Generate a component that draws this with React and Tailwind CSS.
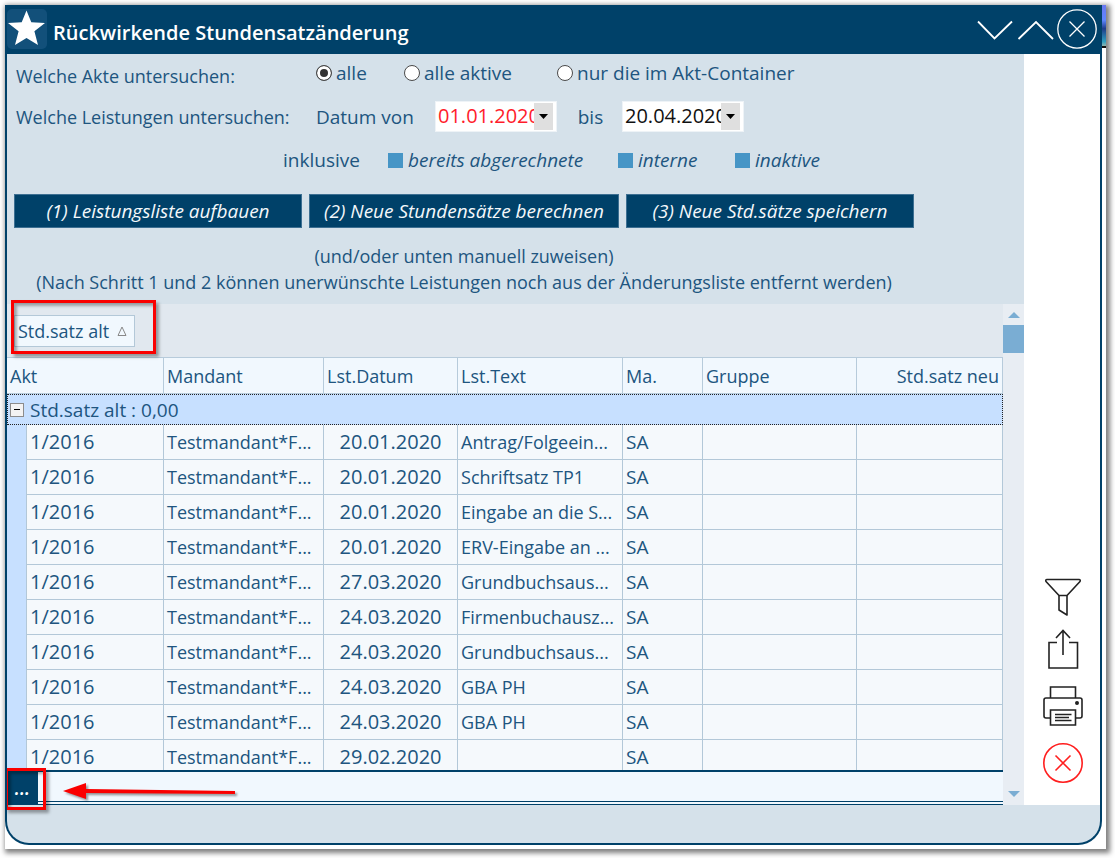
import React from "react";

const rows = [
  ["1/2016", "Testmandant*F...", "20.01.2020", "Antrag/Folgeein...", "SA"],
  ["1/2016", "Testmandant*F...", "20.01.2020", "Schriftsatz TP1", "SA"],
  ["1/2016", "Testmandant*F...", "20.01.2020", "Eingabe an die S...", "SA"],
  ["1/2016", "Testmandant*F...", "20.01.2020", "ERV-Eingabe an ...", "SA"],
  ["1/2016", "Testmandant*F...", "27.03.2020", "Grundbuchsaus...", "SA"],
  ["1/2016", "Testmandant*F...", "24.03.2020", "Firmenbuchausz...", "SA"],
  ["1/2016", "Testmandant*F...", "24.03.2020", "Grundbuchsaus...", "SA"],
  ["1/2016", "Testmandant*F...", "24.03.2020", "GBA PH", "SA"],
  ["1/2016", "Testmandant*F...", "24.03.2020", "GBA PH", "SA"],
  ["1/2016", "Testmandant*F...", "29.02.2020", "", "SA"],
];

function TitleBar() {
  return (
    <header className="flex h-[49px] shrink-0 items-center bg-[#004169] pr-[3px] pb-px text-white">
      <svg className="h-10 w-10 shrink-0" viewBox="0 0 40 40" aria-hidden="true">
        <rect width="40" height="40" rx="5" fill="#12507a" />
        <path
          d="M19.5 1.500 L24.3 13.3 L38 14.1 L27.4 22.3 L31 36 L19.5 29 L8 36 L11.6 22.3 L1 14.1 L14.7 13.3 Z"
          fill="#fff"
        />
      </svg>
      <h1 className="ml-[6px] mt-2 flex-1 truncate text-[20px] leading-7 font-semibold">
        Rückwirkende Stundensatzänderung
      </h1>
      <button type="button" aria-label="Nach unten" className="h-10 w-10">
        <svg viewBox="0 0 40 40" className="h-10 w-10" fill="none" stroke="#fff" strokeWidth="1.8">
          <path d="M1 12.500 L17.500 29.500 L35 12.500" />
        </svg>
      </button>
      <button type="button" aria-label="Nach oben" className="h-10 w-10">
        <svg viewBox="0 0 40 40" className="h-10 w-10" fill="none" stroke="#fff" strokeWidth="1.8">
          <path d="M1.500 30 L19 13 L36 30" />
        </svg>
      </button>
      <button type="button" aria-label="Schließen" className="h-10 w-10">
        <svg viewBox="0 0 40 40" className="h-10 w-10" fill="none" stroke="#fff" strokeWidth="1.300">
          <circle cx="20" cy="20" r="19.200" />
          <path d="M12.500 12.500 L27.500 27.500 M27.500 12.500 L12.500 27.500" />
        </svg>
      </button>
    </header>
  );
}

function Radio({ label, checked }) {
  return (
    <label className="flex items-center gap-1 whitespace-nowrap">
      <input
        type="radio"
        name="akte"
        defaultChecked={checked}
        className="h-4 w-4 shrink-0 appearance-none rounded-full border border-[#4a4a4a] bg-white checked:bg-[#333] checked:shadow-[inset_0_0_0_3px_#fff]"
      />
      {label}
    </label>
  );
}

function Check({ label }) {
  return (
    <label className="flex items-center gap-[5px] whitespace-nowrap italic">
      <input type="checkbox" className="h-[15px] w-[15px] shrink-0 appearance-none bg-[#4695c6]" />
      {label}
    </label>
  );
}

function DateField({ label, value, red }) {
  return (
    <div className="flex h-[31px] w-[122px] shrink-0 border border-[#eef3f7] bg-white p-px pr-[3px]">
      <input
        type="text"
        aria-label={label}
        defaultValue={value}
        className={
          "h-[26px] w-0 flex-1 bg-white pl-px text-[20px] outline-none " + (red ? "text-[#ff1c2b]" : "text-[#111]")
        }
      />
      <button
        type="button"
        aria-label={label + " wählen"}
        className="flex h-[27px] w-[19px] items-center justify-center bg-[#dfdfdf]"
      >
        <svg viewBox="0 0 9 5" className="h-[5px] w-[9px]" aria-hidden="true">
          <path d="M0 0 H9 L4.500 5 Z" fill="#000" />
        </svg>
      </button>
    </div>
  );
}

const action =
  "h-[34px] border border-[#3d6f92] bg-[#004169] text-center italic whitespace-nowrap text-[#f4f8fb]";

function Filters() {
  return (
    <form className="flex h-[250px] shrink-0 flex-col">
      <div className="mt-[3px] grid h-8 grid-cols-[300px_88px_153px_auto] items-center pl-[9px]">
        <span className="pt-[6px] text-[18px]">Welche Akte untersuchen:</span>
        <Radio label="alle" checked />
        <Radio label="alle aktive" />
        <Radio label="nur die im Akt-Container" />
      </div>
      <div className="mt-3 flex h-[31px] items-center pl-[9px]">
        <span className="w-[300px] shrink-0 text-[18px]">Welche Leistungen untersuchen:</span>
        <span className="w-[119px] shrink-0">Datum von</span>
        <DateField label="Datum von" value="01.01.2020" red />
        <span className="w-[65px] pl-[2px] text-center">bis</span>
        <DateField label="Datum bis" value="20.04.2020" />
      </div>
      <div className="mt-3 grid h-8 grid-cols-[105px_230px_117px_auto] items-center pl-[276px]">
        <span>inklusive</span>
        <Check label="bereits abgerechnete" />
        <Check label="interne" />
        <Check label="inaktive" />
      </div>
      <div className="mt-[18px] flex gap-[7px] pl-[7px]">
        <button type="button" className={action + " w-[288px]"}>(1) Leistungsliste aufbauen</button>
        <button type="button" className={action + " w-[310px]"}>(2) Neue Stundensätze berechnen</button>
        <button type="button" className={action + " w-[288px]"}>(3) Neue Std.sätze speichern</button>
      </div>
      <div className="mt-[15px] w-[914px] text-center text-[18px] leading-[26px]">
        <p>(und/oder unten manuell zuweisen)</p>
        <p>(Nach Schritt 1 und 2 können unerwünschte Leistungen noch aus der Änderungsliste entfernt werden)</p>
      </div>
    </form>
  );
}

const th =
  "h-[37px] whitespace-nowrap border-r border-b border-t border-[#b7cbdb] bg-[#f1f8fe] px-[3px] text-[18px] font-normal";
const td = "h-[35px] whitespace-nowrap border-r border-b border-[#b3c8d8] bg-[#f5f9fc] px-[3px]";

function Grid() {
  return (
    <table className="w-full table-fixed border-separate border-spacing-0 text-left">
      <colgroup>
        <col className="w-[20px]" />
        <col className="w-[137px]" />
        <col className="w-[160px]" />
        <col className="w-[134px]" />
        <col className="w-[165px]" />
        <col className="w-[80px]" />
        <col className="w-[154px]" />
        <col />
      </colgroup>
      <thead>
        <tr>
          <th colSpan={2} className={th}>Akt</th>
          <th className={th}>Mandant</th>
          <th className={th}>Lst.Datum</th>
          <th className={th}>Lst.Text</th>
          <th className={th}>Ma.</th>
          <th className={th}>Gruppe</th>
          <th className={th + " text-right"}>Std.satz neu</th>
        </tr>
      </thead>
      <tbody>
        <tr>
          <td colSpan={8} className="h-[31px] border border-dotted border-[#222] bg-[#c7e0ff] p-0">
            <div className="flex items-center gap-[6px] pl-[2px]">
              <button
                type="button"
                aria-label="Gruppe einklappen"
                className="flex h-[14px] w-[14px] items-center justify-center border border-[#8c8c8c] bg-[#f3f3f3]"
              >
                <span className="h-px w-[6px] bg-black" />
              </button>
              <span>Std.satz alt : 0,00</span>
            </div>
          </td>
        </tr>
        {rows.map((r, i) => (
          <tr key={i}>
            <td className="border-r border-[#b3c8d8] bg-[#c7e0ff] p-0" />
            <td className={td + " text-[20px]"}>{r[0]}</td>
            <td className={td + " text-[18px]"}>{r[1]}</td>
            <td className={td + " text-center text-[20px]"}>{r[2]}</td>
            <td className={td + " text-[18px]"}>{r[3]}</td>
            <td className={td}>{r[4]}</td>
            <td className={td} />
            <td className={td} />
          </tr>
        ))}
      </tbody>
    </table>
  );
}

function ScrollBar() {
  return (
    <div className="flex w-[21px] shrink-0 flex-col items-center bg-[#e8edf3]">
      <svg viewBox="0 0 12 6" className="mt-2 h-[6px] w-3" aria-hidden="true">
        <path d="M0 6 L6 0 L12 6 Z" fill="#7aadd3" />
      </svg>
      <div className="mt-[7px] h-[28px] w-full bg-[#7aadd3]" />
      <svg viewBox="0 0 12 6" className="mt-auto mb-2 h-[6px] w-3" aria-hidden="true">
        <path d="M0 0 L6 6 L12 0 Z" fill="#7aadd3" />
      </svg>
    </div>
  );
}

function SideBar() {
  return (
    <aside className="flex w-[76px] shrink-0 flex-col items-center justify-end gap-[17px] bg-white pb-[22px] pl-[2px]">
      <button type="button" aria-label="Filter">
        <svg viewBox="0 0 40 38" className="h-[38px] w-10" fill="none" stroke="#222" strokeWidth="1.600" strokeLinejoin="round">
          <path d="M4 1.500 H36 Q37.800 1.500 37 3.500 L24 17.500 H16 L3 3.500 Q2.200 1.500 4 1.500 Z" />
          <path d="M16 17.500 V32 L24 37 V17.500" />
        </svg>
      </button>
      <button type="button" aria-label="Exportieren" className="-mt-1">
        <svg viewBox="0 0 40 40" className="h-10 w-10" fill="none" stroke="#222" strokeWidth="1.600">
          <path d="M14 13.500 H6 V39 H34.500 V13.500 H26" />
          <path d="M20 26 V2 M13 9 L20 1.500 L27 9" />
        </svg>
      </button>
      <button type="button" aria-label="Drucken">
        <svg viewBox="0 0 40 40" className="h-10 w-10" fill="none" stroke="#222" strokeWidth="1.600">
          <path d="M7.500 12 V1 H32.500 V12" />
          <path d="M7.500 32 H3 Q1 32 1 30 V14 Q1 12 3 12 H37 Q39 12 39 14 V30 Q39 32 37 32 H32.500" />
          <path d="M7.500 24 H32.500 V39 H7.500 Z M12 28.500 H28.500 M12 31.500 H26 M12 34.500 H28.500" />
          <circle cx="34" cy="17" r="1.200" fill="#222" />
        </svg>
      </button>
      <button type="button" aria-label="Abbrechen">
        <svg viewBox="0 0 40 40" className="h-10 w-10" fill="none" stroke="#ff1f1f" strokeWidth="1.600">
          <circle cx="20" cy="20" r="19.200" />
          <path d="M12.500 12.500 L27.500 27.500 M27.500 12.500 L12.500 27.500" />
        </svg>
      </button>
    </aside>
  );
}

const marker =
  "pointer-events-none absolute border-[3px] border-[#fa0000] shadow-[3px_3px_3px_rgba(0,0,0,0.35),inset_3px_3px_3px_rgba(0,0,0,0.3)]";

export default function App() {
  return (
    <div className="h-screen bg-white pt-[5px] pr-[9px] pb-[9px] pl-[5px] font-['Open_Sans','Noto_Sans',sans-serif] text-[19px] leading-[26px] text-[#20557f]">
      <div className="flex h-full flex-col bg-[linear-gradient(180deg,#6a78f0_0%,#5f86ff_35%,#1f3d8a_55%,#2f9fc0_85%,#8fb5b0_95%,#111_96%)] bg-[length:100%_43px] bg-no-repeat pr-1 pb-1 shadow-[2px_2px_5px_2px_rgba(0,0,0,0.5)]">
        <main className="flex min-h-0 flex-1 flex-col overflow-hidden rounded-b-[24px] border-x-2 border-b-2 border-[#004169] bg-[#d5e1ea]">
          <TitleBar />
          <div className="flex min-h-0 flex-1">
            <div className="flex min-w-0 flex-1 flex-col">
              <Filters />
              <div className="flex min-h-0 flex-1">
                <section className="flex min-w-0 flex-1 flex-col">
                  <div className="relative flex h-[53px] shrink-0 items-center bg-[#e1e8ef] pl-[7px]">
                    <button
                      type="button"
                      className="flex h-8 items-center gap-2 border border-[#b3c8d8] bg-[#f1f8fe] pr-[7px] pl-[3px] text-[18px]"
                    >
                      Std.satz alt
                      <svg viewBox="0 0 10 10" className="h-[10px] w-[10px]" fill="none" stroke="#888" aria-hidden="true">
                        <path d="M1 9.500 L5 1 L9 9.500 Z" />
                      </svg>
                    </button>
                    <div className={marker + " -top-[4px] left-[4px] h-[54px] w-[145px]"} />
                  </div>
                  <div className="min-h-0 flex-1 overflow-hidden">
                    <Grid />
                  </div>
                  <div className="relative h-[35px] shrink-0 border-t-2 border-b-4 border-double border-[#004169] bg-[#f1f8fe]">
                    <button type="button" className="h-8 w-[31px] bg-[#004169] font-semibold italic text-white">
                      ...
                    </button>
                    <div className={marker + " -top-[4px] -left-[2px] h-[42px] w-[41px]"} />
                    <svg viewBox="0 0 178 22" className="absolute top-[10px] left-[56px] h-[22px] w-[178px] drop-shadow-[2px_2px_1px_rgba(0,0,0,0.4)]" aria-hidden="true">
                      <path d="M0 9 L23 1 V7 L172 9 V12 L23 11 V17 Z" fill="#fa0000" />
                    </svg>
                  </div>
                </section>
                <ScrollBar />
              </div>
            </div>
            <SideBar />
          </div>
          <footer className="h-[38px] shrink-0" />
        </main>
      </div>
    </div>
  );
}
